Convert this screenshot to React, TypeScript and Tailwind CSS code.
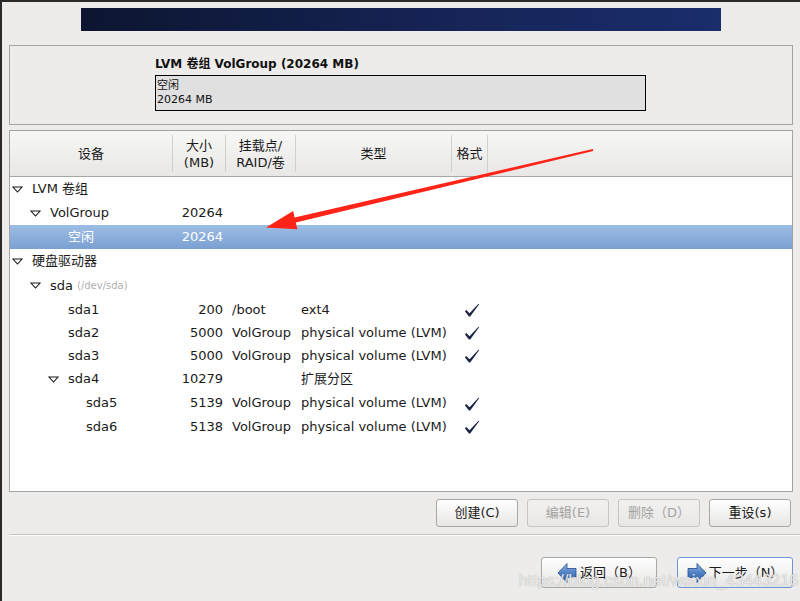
import React from 'react'

interface Row {
  level: number
  expander?: boolean
  name: string
  sub?: string
  size?: string
  mount?: string
  type?: string
  format?: boolean
  selected?: boolean
  h: string
}

const rows: Row[] = [
  { level: 0, expander: true, name: 'LVM 卷组', h: 'h-[24px]' },
  { level: 1, expander: true, name: 'VolGroup', size: '20264', h: 'h-[24px]' },
  { level: 2, name: '空闲', size: '20264', selected: true, h: 'h-[24px]' },
  { level: 0, expander: true, name: '硬盘驱动器', h: 'h-[24px]' },
  { level: 1, expander: true, name: 'sda', sub: '(/dev/sda)', h: 'h-[25px]' },
  { level: 2, name: 'sda1', size: '200', mount: '/boot', type: 'ext4', format: true, h: 'h-[23px]' },
  { level: 2, name: 'sda2', size: '5000', mount: 'VolGroup', type: 'physical volume (LVM)', format: true, h: 'h-[23px]' },
  { level: 2, name: 'sda3', size: '5000', mount: 'VolGroup', type: 'physical volume (LVM)', format: true, h: 'h-[23px]' },
  { level: 2, expander: true, name: 'sda4', size: '10279', type: '扩展分区', h: 'h-[24px]' },
  { level: 3, name: 'sda5', size: '5139', mount: 'VolGroup', type: 'physical volume (LVM)', format: true, h: 'h-[24px]' },
  { level: 3, name: 'sda6', size: '5138', mount: 'VolGroup', type: 'physical volume (LVM)', format: true, h: 'h-[23px]' },
]

const cols = 'grid grid-cols-[163px_53px_70px_156px_36px_1fr]'

function Expander() {
  return (
    <svg width="11" height="7" viewBox="0 0 11 7" className="shrink-0">
      <polygon points="1,1 10,1 5.5,6" fill="none" stroke="#1a1a1a" strokeWidth="1.1" />
    </svg>
  )
}

function Check() {
  return (
    <svg width="16" height="15" viewBox="0 0 15 14">
      <path d="M0.8 7.6 L2.2 6.6 L5.2 9.6 L13.6 0.6 L14.2 1.2 L5.8 12.6 L4.6 12.6 Z" fill="#1c2644" />
    </svg>
  )
}

function NavArrow({ dir }: { dir: 'left' | 'right' }) {
  const pts = dir === 'left' ? '1,11 10,1.5 10,6.5 19,6.5 19,15.5 10,15.5 10,20.5' : '19,11 10,1.5 10,6.5 1,6.5 1,15.5 10,15.5 10,20.5'
  return (
    <svg width="20" height="22" viewBox="0 0 20 22" className="shrink-0">
      <defs>
        <linearGradient id={`g-${dir}`} x1="0" y1="0" x2="0" y2="1">
          <stop offset="0" stopColor="#8db3e2" />
          <stop offset="0.5" stopColor="#4f7fc4" />
          <stop offset="1" stopColor="#2a5aa3" />
        </linearGradient>
      </defs>
      <polygon points={pts} fill={`url(#g-${dir})`} stroke="#1f4a8a" strokeWidth="0.8" strokeLinejoin="round" />
    </svg>
  )
}

function Btn({ label, disabled }: { label: string; disabled?: boolean }) {
  return (
    <div
      className={`w-[82px] h-[28px] rounded-[3px] border flex items-center justify-center text-[13px] ${
        disabled
          ? 'border-[#c4c4c4] bg-gradient-to-b from-[#f2f1ef] to-[#e8e7e5] text-[#a3a3a3]'
          : 'border-[#a7a7a7] bg-gradient-to-b from-white to-[#e7e6e4] text-[#1a1a1a]'
      }`}
    >
      {label}
    </div>
  )
}

export default function App() {
  return (
    <div className="relative w-[800px] h-[601px] overflow-hidden bg-[#edecea] border-t-2 border-l-2 border-[#2a2a2a] font-['DejaVu_Sans','Noto_Sans_CJK_SC',sans-serif] text-[#1a1a1a] flex flex-col">
      {/* banner */}
      <div className="ml-[79px] mt-[6px] w-[640px] h-[23px] shrink-0 bg-gradient-to-r from-[#0c1530] via-[#152252] to-[#1a2d6c]" />

      {/* vg summary */}
      <div className="ml-[7px] mt-[14px] w-[784px] h-[80px] shrink-0 border border-[#a3a3a2] pl-[145px] pt-[10px]">
        <div className="text-[12px] font-bold leading-[16px] text-[#111]">LVM 卷组 VolGroup (20264 MB)</div>
        <div className="mt-[3px] w-[491px] h-[36px] border border-black bg-[#e0e0e0] pl-[1px] pt-[3px] text-[11px] leading-[14px] text-[#111]">
          <div>空闲</div>
          <div>20264 MB</div>
        </div>
      </div>

      {/* device tree */}
      <div className="ml-[7px] mt-[5px] w-[784px] h-[362px] shrink-0 border border-[#a3a3a2] bg-white flex flex-col">
        <div className={`${cols} h-[46px] shrink-0 bg-gradient-to-b from-[#f7f7f6] to-[#e8e7e5] border-b border-[#a6a6a5] text-[13px] leading-[17px]`}>
          <div className="flex items-center justify-center border-r border-[#cfcfcd] my-[4px]">设备</div>
          <div className="flex flex-col items-center justify-center border-r border-[#cfcfcd] my-[4px]">
            <span>大小</span>
            <span>(MB)</span>
          </div>
          <div className="flex flex-col items-center justify-center border-r border-[#cfcfcd] my-[4px]">
            <span>挂载点/</span>
            <span>RAID/卷</span>
          </div>
          <div className="flex items-center justify-center border-r border-[#cfcfcd] my-[4px]">类型</div>
          <div className="flex items-center justify-center border-r border-[#cfcfcd] my-[4px]">格式</div>
          <div />
        </div>
        {rows.map((r) => (
          <div
            key={r.name}
            className={`${cols} ${r.h} shrink-0 items-center text-[13px] ${
              r.selected ? 'bg-gradient-to-b from-[#9dbde3] to-[#7aa0d2] text-white' : ''
            }`}
          >
            <div className="flex items-center whitespace-nowrap">
              {r.expander ? (
                <>
                  <div style={{ width: 2 + 18 * r.level }} className="shrink-0" />
                  <Expander />
                  <div className="w-[9px] shrink-0" />
                </>
              ) : (
                <div style={{ width: 22 + 18 * r.level }} className="shrink-0" />
              )}
              <span>{r.name}</span>
              {r.sub && <span className="ml-[4px] text-[10px] text-[#b0b0b0]">{r.sub}</span>}
            </div>
            <div className="text-right pr-[3px]">{r.size}</div>
            <div className="pl-[6px] whitespace-nowrap">{r.mount}</div>
            <div className="pl-[5px] whitespace-nowrap">{r.type}</div>
            <div className="flex justify-center pl-[3px] pt-[2px]">{r.format && <Check />}</div>
            <div />
          </div>
        ))}
      </div>

      {/* action buttons */}
      <div className="mt-[7px] flex justify-end gap-[9px] pr-[9px] shrink-0">
        <Btn label="创建(C)" />
        <Btn label="编辑(E)" disabled />
        <Btn label="删除（D）" disabled />
        <Btn label="重设(s)" />
      </div>

      <div className="ml-[7px] mt-[7px] h-[2px] shrink-0 border-t border-[#c3c3c1] border-b border-b-white" />

      {/* nav buttons */}
      <div className="mt-[21px] flex justify-end gap-[20px] pr-[7px] shrink-0">
        <div className="w-[116px] h-[31px] rounded-[3px] border border-[#a7a7a7] bg-gradient-to-b from-white to-[#e7e6e4] flex items-center justify-center gap-[3px] text-[13px]">
          <NavArrow dir="left" />
          <span>返回（B）</span>
        </div>
        <div className="w-[116px] h-[31px] rounded-[3px] border border-[#7196cf] bg-gradient-to-b from-white to-[#e7e6e4] flex items-center justify-center gap-[2px] text-[13px]">
          <NavArrow dir="right" />
          <span>下一步（N）</span>
        </div>
      </div>

      {/* annotation arrow + watermark */}
      <svg className="absolute left-[-2px] top-[-2px] pointer-events-none" width="800" height="601" viewBox="0 0 800 601">
        <polygon
          points="593.3,151 592.7,149 294.6,217.4 293.1,211 266,227.5 297.3,229.2 295.8,222.6"
          fill="#ff2418"
        />
      </svg>
      <div className="absolute left-[517px] top-[567px] text-[16px] tracking-[0.2px] text-white/80 font-['Liberation_Sans',sans-serif] [text-shadow:0_0_1px_#8a8a8a] pointer-events-none whitespace-nowrap">
        https://blog.csdn.net/weixin_43443216
      </div>
    </div>
  )
}
